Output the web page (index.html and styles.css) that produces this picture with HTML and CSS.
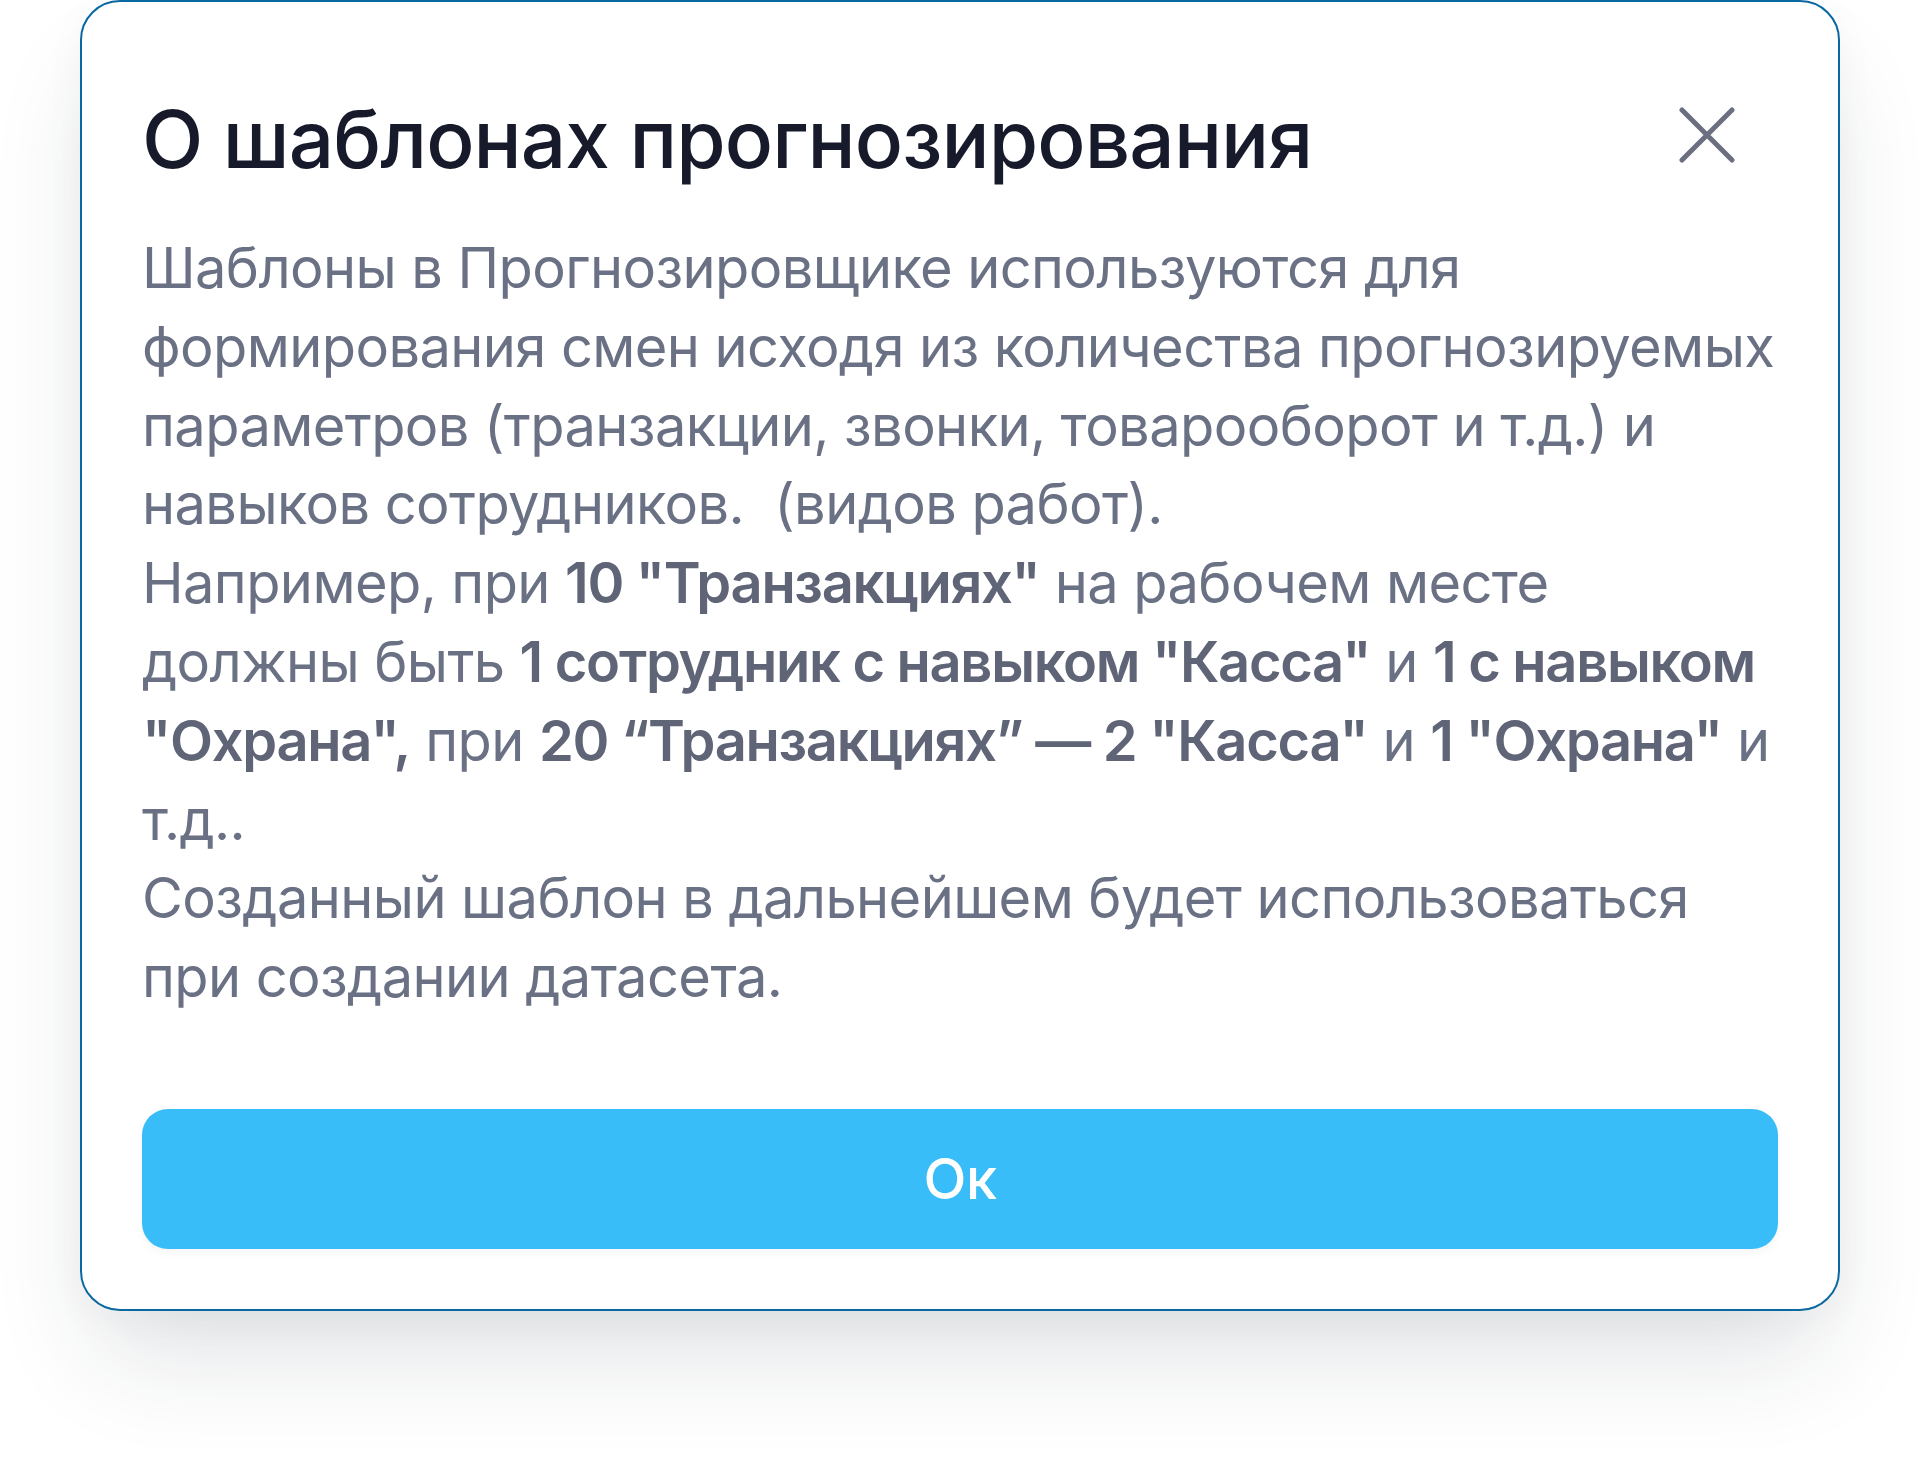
FILE: index.html
```html
<!DOCTYPE html>
<html lang="ru">
<head>
<meta charset="utf-8">
<title>О шаблонах прогнозирования</title>
<link rel="stylesheet" href="styles.css">
</head>
<body>
<div class="modal">
  <div class="modal-header">
    <h1 class="modal-title">О шаблонах прогнозирования</h1>
    <button class="close-btn" aria-label="Закрыть">
      <svg viewBox="0 0 56 56" width="56" height="56">
        <path d="M3 3 L53 53 M53 3 L3 53" stroke="#6b6f80" stroke-width="5" stroke-linecap="round" fill="none"/>
      </svg>
    </button>
  </div>
  <div class="modal-body">
    <p>Шаблоны в Прогнозировщике используются для<br>формирования смен исходя из количества прогнозируемых<br>параметров (транзакции, звонки, товарооборот и т.д.) и<br>навыков сотрудников.&nbsp; (видов работ).</p>
    <p>Например, при <b>10 "Транзакциях"</b> на рабочем месте<br>должны быть <b>1 сотрудник с навыком "Касса"</b> и <b>1 с навыком</b><br><b>"Охрана",</b> при <b>20 “Транзакциях” — 2 "Касса"</b> и <b>1 "Охрана"</b> и<br>т.д..</p>
    <p>Созданный шаблон в дальнейшем будет использоваться<br>при создании датасета.</p>
  </div>
  <button class="ok-btn">Ок</button>
</div>
</body>
</html>
```
FILE: styles.css
```css
html, body {
  margin: 0;
  padding: 0;
  background: #ffffff;
}
body {
  font-family: Inter, "Noto Sans", sans-serif;
  padding: 0 80px;
  height: 1471px;
  box-sizing: border-box;
  overflow: hidden;
}
.modal {
  box-sizing: border-box;
  width: 1760px;
  border: 2px solid #0a68a0;
  border-radius: 40px;
  background: #fff;
  padding: 89px 60px 60px 60px;
  display: flex;
  flex-direction: column;
  box-shadow: 0 60px 110px -20px rgba(30, 40, 60, 0.14), 0 10px 40px rgba(30, 40, 60, 0.04);
}
.modal-header {
  display: flex;
  align-items: center;
  justify-content: space-between;
  padding-right: 43px;
}
.modal-title {
  margin: 0;
  font-size: 80px;
  line-height: 96px;
  font-weight: 500;
  color: #161a2b;
  letter-spacing: -0.9px;
}
.close-btn {
  border: 0;
  background: none;
  padding: 0;
  width: 56px;
  height: 56px;
  display: flex;
  margin-top: -8px;
}
.modal-body {
  margin-top: 42px;
  font-size: 56px;
  line-height: 78.8px;
  color: #6b7184;
  white-space: nowrap;
  letter-spacing: -0.6px;
}
.modal-body p {
  margin: 0;
}
.modal-body b {
  font-weight: 600;
  color: #5f6577;
  letter-spacing: -1.3px;
}
.ok-btn {
  margin-top: 92px;
  height: 140px;
  border: 0;
  border-radius: 26px;
  background: #38bdf8;
  color: #ffffff;
  font-family: Inter, "Noto Sans", sans-serif;
  font-size: 56px;
  font-weight: 500;
  letter-spacing: -0.5px;
  box-shadow: 0 4px 10px rgba(0, 0, 0, 0.04);
}
```
